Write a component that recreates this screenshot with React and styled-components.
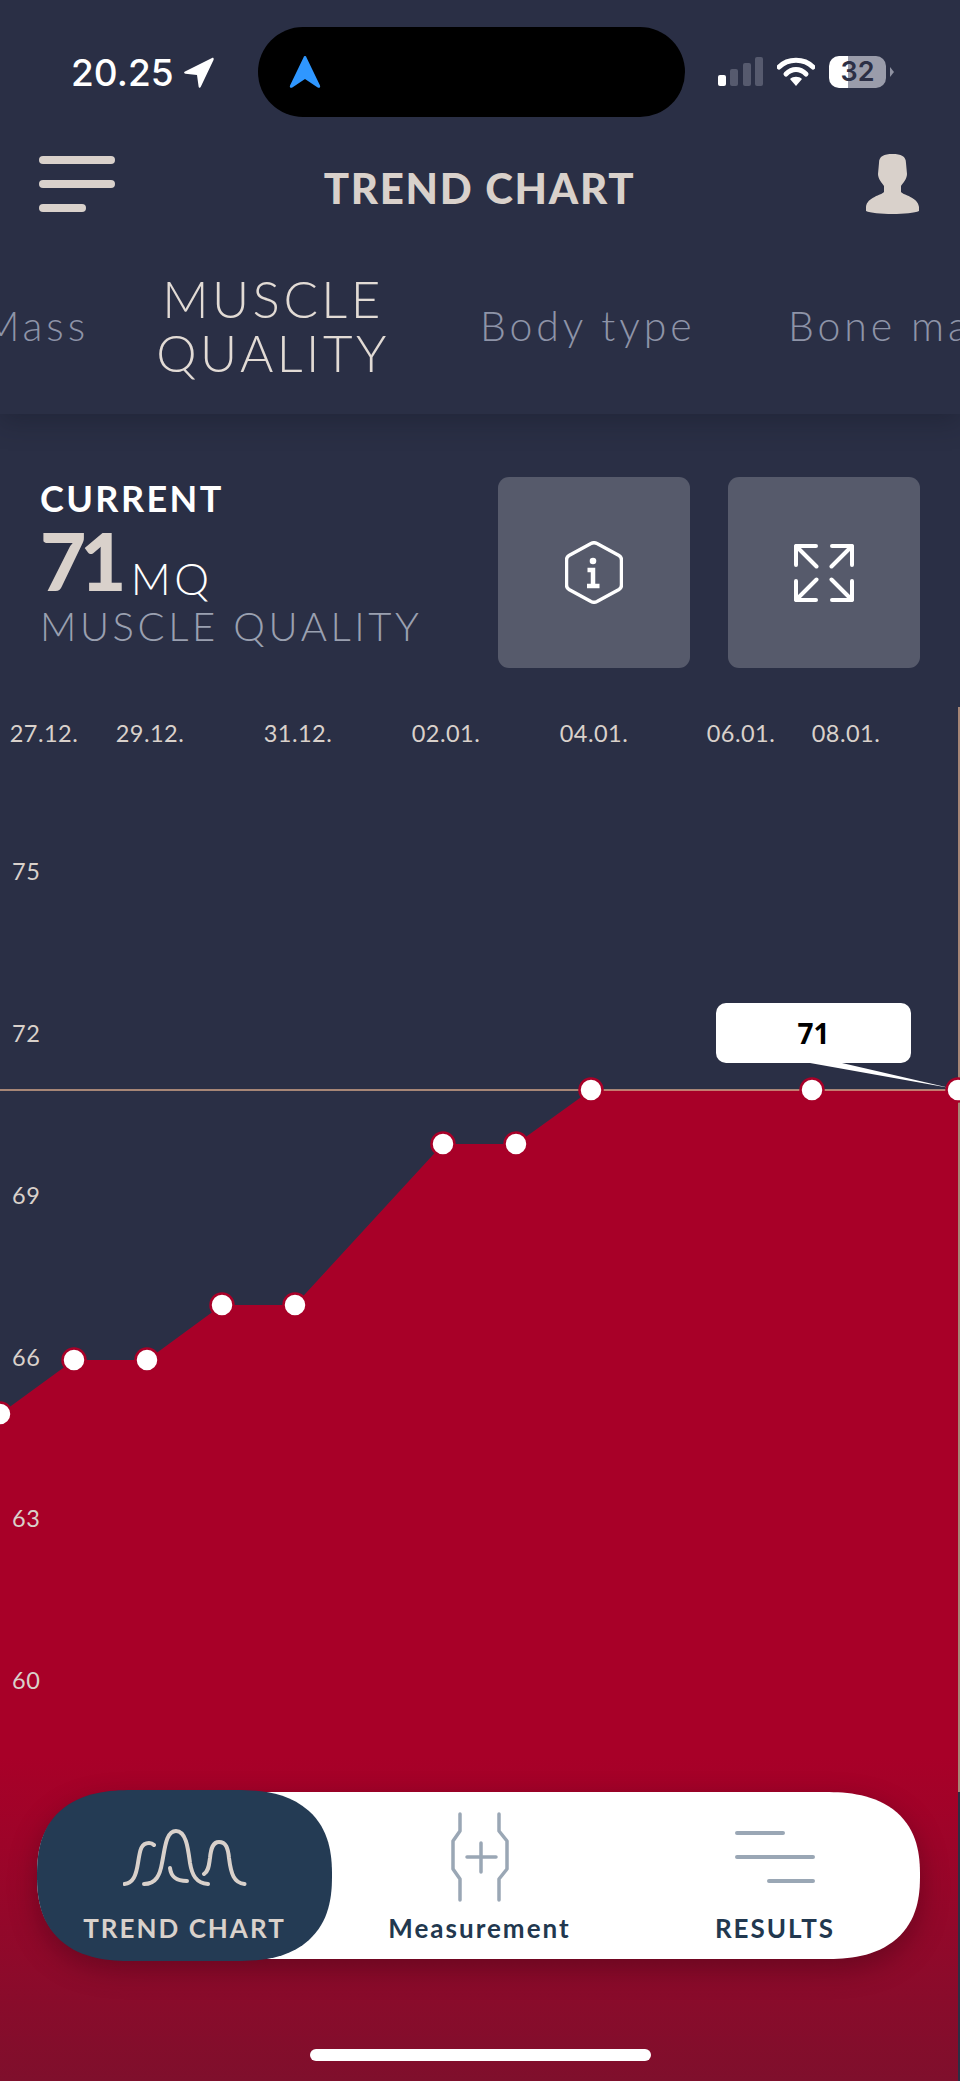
import React from "react";
import styled, { createGlobalStyle } from "styled-components";

const GlobalStyle = createGlobalStyle`
  html, body {
    margin: 0;
    padding: 0;
    background: #2a2f45;
  }
  * {
    box-sizing: border-box;
  }
`;

const Page = styled.div`
  position: relative;
  width: 960px;
  height: 2081px;
  overflow: hidden;
  background: #2a2f45;
  font-family: Lato, "Liberation Sans", sans-serif;
  display: flex;
  flex-direction: column;
`;

// header
const Header = styled.header`
  height: 414px;
  flex: none;
  display: flex;
  flex-direction: column;
  box-shadow: 0 8px 24px rgba(20, 23, 38, 0.35);
  position: relative;
  z-index: 2;
  background: #2a2f45;
`;

const StatusBar = styled.div`
  height: 118px;
  padding: 27px 0 0 71px;
  display: flex;
  align-items: flex-start;
`;

const TimeBlock = styled.div`
  width: 187px;
  height: 90px;
  display: flex;
  align-items: center;
  gap: 9px;
  font-family: Inter, sans-serif;
  font-size: 37px;
  font-weight: 500;
  color: #fff;
`;

const Island = styled.div`
  width: 427px;
  height: 90px;
  background: #000;
  border-radius: 45px;
  padding-left: 31px;
  display: flex;
  align-items: center;
`;

const StatusIcons = styled.div`
  height: 90px;
  margin-left: 33px;
  display: flex;
  align-items: center;
  gap: 14px;
`;

const Battery = styled.div`
  position: relative;
  width: 57px;
  height: 32px;
  border-radius: 10px;
  background: linear-gradient(90deg, #fff 33%, #9a9caa 33%);
  color: #2c2f45;
  font-family: Inter, sans-serif;
  font-size: 27px;
  font-weight: 600;
  line-height: 32px;
  text-align: center;

  &::after {
    content: "";
    position: absolute;
    top: 11px;
    right: -8px;
    border-left: 4px solid #8f92a2;
    border-top: 5px solid transparent;
    border-bottom: 5px solid transparent;
  }
`;

const NavRow = styled.div`
  height: 100px;
  padding: 38px 40px 0 39px;
  display: grid;
  grid-template-columns: 76px 1fr 76px;
  align-items: start;
`;

const Burger = styled.div`
  width: 76px;
  display: flex;
  flex-direction: column;
  gap: 16px;
`;

const BurgerLine = styled.span`
  display: block;
  height: 8px;
  width: ${(props) => (props.$short ? "47px" : "76px")};
  border-radius: 4px;
  background: #d9d1cb;
`;

const Title = styled.h1`
  margin: 7px 0 0 0;
  font-size: 42px;
  line-height: 50px;
  font-weight: 900;
  letter-spacing: 1.7px;
  text-align: center;
  color: #d9d1cb;
`;

const UserIcon = styled.svg`
  margin-top: -3px;
  justify-self: end;
`;

const TabRow = styled.div`
  flex: 1;
  display: grid;
  grid-template-columns: 143px 260px 385px 1fr;
  align-items: start;
  white-space: nowrap;
  overflow: hidden;
`;

const Tab = styled.div`
  font-weight: 300;
  font-size: 41px;
  line-height: 48px;
  letter-spacing: 3.9px;
  color: #8e94a8;
  margin-top: 84px;
  justify-self: ${(props) => (props.$end ? "end" : "start")};
  padding-right: ${(props) => (props.$end ? "54px" : "0")};
  padding-left: ${(props) => props.$pad || 0}px;
`;

const ActiveTab = styled.div`
  margin-top: 54px;
  text-align: center;
  font-weight: 300;
  font-size: 51px;
  line-height: 54px;
  letter-spacing: 3.5px;
  white-space: normal;
  color: #e2dbd5;
`;

// summary
const Summary = styled.section`
  flex: none;
  height: 290px;
  padding: 63px 40px 0 40px;
  display: flex;
  justify-content: space-between;
  align-items: flex-start;
`;

const Current = styled.div`
  display: flex;
  flex-direction: column;
`;

const CurrentLabel = styled.div`
  font-size: 36px;
  line-height: 36px;
  font-weight: 700;
  letter-spacing: 2.4px;
  margin-top: 3px;
  color: #fff;
`;

const ValueRow = styled.div`
  display: flex;
  align-items: baseline;
  gap: 11px;
  margin-top: 2px;
  height: 84px;
`;

const Value = styled.span`
  font-size: 80px;
  line-height: 84px;
  font-weight: 900;
  letter-spacing: -6.5px;
  color: #d9d1cb;
`;

const Unit = styled.span`
  font-size: 44px;
  font-weight: 300;
  letter-spacing: 3.5px;
  position: relative;
  top: 4px;
  color: #fff;
`;

const Metric = styled.div`
  font-size: 40px;
  line-height: 44px;
  font-weight: 300;
  letter-spacing: 3.6px;
  margin-top: 2px;
  color: #9aa0b0;
`;

const Actions = styled.div`
  display: flex;
  gap: 38px;
`;

const ActionButton = styled.div`
  width: 192px;
  height: 191px;
  border-radius: 11px;
  background: #565a6b;
  display: flex;
  align-items: center;
  justify-content: center;
`;

// chart
const ChartArea = styled.section`
  position: relative;
  flex: 1;
`;

const ChartSvg = styled.svg`
  display: block;
  width: 960px;
  height: 1377px;
`;

const AxisText = styled.text`
  font-family: Lato, "Liberation Sans", sans-serif;
  font-size: 23.5px;
  letter-spacing: 0.5px;
  fill: #d9d1cb;
`;

const Tooltip = styled.div`
  position: absolute;
  left: 716px;
  top: 299px;
  width: 195px;
  height: 60px;
  border-radius: 10px;
  background: #fff;
  color: #000;
  font-family: "Open Sans", sans-serif;
  font-size: 28px;
  font-weight: 700;
  line-height: 60px;
  text-align: center;
`;

// bottom nav
const BottomNav = styled.nav`
  position: absolute;
  left: 37px;
  top: 1792px;
  width: 883px;
  height: 167px;
  border-radius: 95px / 83px;
  corner-shape: superellipse(1.3);
  background: #fff;
  box-shadow: 0 10px 28px rgba(60, 5, 20, 0.45);
  display: grid;
  grid-template-columns: 295px 295px 296px;
  z-index: 3;
`;

const NavItem = styled.div`
  height: ${(props) => (props.$active ? "171px" : "167px")};
  margin-top: ${(props) => (props.$active ? "-2px" : "0")};
  padding-top: ${(props) => (props.$active ? "11px" : "9px")};
  border-radius: ${(props) => (props.$active ? "95px / 85px" : "0")};
  corner-shape: superellipse(1.3);
  background: ${(props) => (props.$active ? "#243b54" : "transparent")};
  color: ${(props) => (props.$active ? "#d9d1cb" : "#22384f")};
  display: flex;
  flex-direction: column;
  align-items: center;
`;

const NavIconBox = styled.div`
  height: 112px;
  display: flex;
  align-items: center;
  justify-content: center;
`;

const NavLabel = styled.div`
  font-size: 26px;
  line-height: 30px;
  font-weight: 700;
  letter-spacing: 2px;
`;

const HomeIndicator = styled.div`
  position: absolute;
  left: 310px;
  top: 2049px;
  width: 341px;
  height: 12px;
  border-radius: 6px;
  background: #fff;
  z-index: 3;
`;

const ORIGIN_Y = 704;
const points = [
  [0, 1414], [74, 1360], [147, 1360], [222, 1305], [295, 1305],
  [443, 1144], [516, 1144], [591, 1090], [812, 1090], [958, 1090],
].map(([x, y]) => [x, y - ORIGIN_Y]);

const dates = [
  ["27.12.", 44], ["29.12.", 150], ["31.12.", 298], ["02.01.", 446],
  ["04.01.", 594], ["06.01.", 741], ["08.01.", 846],
];

const yLabels = [
  ["75", 880], ["72", 1042], ["69", 1204], ["66", 1366], ["63", 1527], ["60", 1689],
];

function Chart() {
  const line = points.map((p) => p.join(",")).join(" ");
  const area = `0,1377 ${line} 958,1377`;
  return (
    <ChartArea>
      <ChartSvg viewBox="0 0 960 1377">
        <defs>
          <linearGradient id="redFade" x1="0" y1="0" x2="0" y2="1377" gradientUnits="userSpaceOnUse">
            <stop offset="0.765" stopColor="#a80028" />
            <stop offset="1" stopColor="#7f0f2c" />
          </linearGradient>
        </defs>
        <polygon points={area} fill="url(#redFade)" />
        <line x1="0" y1={1090 - ORIGIN_Y} x2="960" y2={1090 - ORIGIN_Y} stroke="#d2a587" strokeWidth="1.5" />
        <line x1="959" y1="3" x2="959" y2="1088" stroke="#d2a587" strokeWidth="1.5" />
        <polygon points={`810,${1063 - ORIGIN_Y} 842,${1063 - ORIGIN_Y} 950,${1088 - ORIGIN_Y}`} fill="#fff" />
        {dates.map(([label, x]) => (
          <AxisText key={label} x={x} y={38} textAnchor="middle">{label}</AxisText>
        ))}
        {yLabels.map(([label, y]) => (
          <AxisText key={label} x={12} y={y - ORIGIN_Y}>{label}</AxisText>
        ))}
        {points.map(([x, y]) => (
          <circle key={x} cx={x} cy={y} r="11.5" fill="#fff" stroke="#a80028" strokeWidth="2.5" />
        ))}
      </ChartSvg>
      <Tooltip>71</Tooltip>
    </ChartArea>
  );
}

export default function App() {
  return (
    <Page>
      <GlobalStyle />
      <Header>
        <StatusBar>
          <TimeBlock>
            20.25
            <svg width="31" height="31" viewBox="0 0 31 31">
              <path d="M29 1 2 14.5c-1.5.8-1 2 .5 2.2L14 18l1.6 11.5c.2 1.5 1.6 1.6 2.2.3L30.500 3c.6-1.500-.2-2.600-1.500-2z" fill="#fff" />
            </svg>
          </TimeBlock>
          <Island>
            <svg width="32" height="34" viewBox="0 0 32 34">
              <path d="M16 1c.8 0 1.200.6 1.500 1.400L31 30.500c.7 1.800-.8 3-2.300 2L16 24 3.300 32.500c-1.500 1-3-.2-2.300-2L14.500 2.400C14.800 1.600 15.200 1 16 1z" fill="#2f97ff" />
            </svg>
          </Island>
          <StatusIcons>
            <svg width="45" height="30" viewBox="0 0 45 30">
              <rect x="0" y="18" width="8" height="11" rx="2" fill="#fff" />
              <rect x="12" y="12" width="8" height="17" rx="2" fill="#565a6e" />
              <rect x="25" y="6" width="8" height="23" rx="2" fill="#565a6e" />
              <rect x="37" y="0" width="8" height="29" rx="2" fill="#565a6e" />
            </svg>
            <svg width="38" height="30" viewBox="0 0 38 30">
              <path d="M2 10C11 1 27 1 36 10" fill="none" stroke="#fff" strokeWidth="5" strokeLinecap="round" />
              <path d="M9 17c6-6 14-6 20 0" fill="none" stroke="#fff" strokeWidth="5" strokeLinecap="round" />
              <path d="M13 22c3-3 9-3 12 0l-6 7z" fill="#fff" />
            </svg>
            <Battery>32</Battery>
          </StatusIcons>
        </StatusBar>
        <NavRow>
          <Burger>
            <BurgerLine />
            <BurgerLine />
            <BurgerLine $short />
          </Burger>
          <Title>TREND CHART</Title>
          <UserIcon width="55" height="62" viewBox="0 0 55 62">
            <path d="M27.500 1C36 1 41 3 41 10l1 11c0 5-4 9-6 12v6c2 3 17 5 18 15v4c-8 4-45 4-53 0v-4c1-10 16-12 18-15v-6c-2-3-6-7-6-12l1-11C14 3 19 1 27.500 1z" fill="#d9d1cb" />
          </UserIcon>
        </NavRow>
        <TabRow>
          <Tab $end>Mass</Tab>
          <ActiveTab>MUSCLE QUALITY</ActiveTab>
          <Tab $pad={77}>Body type</Tab>
          <Tab>Bone mass</Tab>
        </TabRow>
      </Header>
      <Summary>
        <Current>
          <CurrentLabel>CURRENT</CurrentLabel>
          <ValueRow>
            <Value>71</Value>
            <Unit>MQ</Unit>
          </ValueRow>
          <Metric>MUSCLE QUALITY</Metric>
        </Current>
        <Actions>
          <ActionButton>
            <svg width="58" height="63" viewBox="0 0 58 63" fill="none" stroke="#fff" strokeWidth="3.5">
              <path d="M26 2.500Q29 1 32 2.500L54 14.500Q56.500 16 56.500 19V44Q56.500 47 54 48.500L32 60.500Q29 62 26 60.500L4 48.500Q1.500 47 1.500 44V19Q1.500 16 4 14.500z" />
              <circle cx="28" cy="20" r="3.300" fill="#fff" stroke="none" />
              <path d="M22.500 29H28V45M22 45H34.500" strokeWidth="4.500" />
            </svg>
          </ActionButton>
          <ActionButton>
            <svg width="60" height="58" viewBox="0 0 60 58" fill="none" stroke="#fff" strokeWidth="4" strokeLinecap="round" strokeLinejoin="round">
              <path d="M2 21V2h20M2 2l20.500 20.500M58 21V2H38M58 2 37.500 22.500M2 37v19h20M2 56l20.500-20.500M58 37v19H38M58 56 37.500 35.500" />
            </svg>
          </ActionButton>
        </Actions>
      </Summary>
      <Chart />
      <BottomNav>
        <NavItem $active>
          <NavIconBox>
            <svg width="124" height="58" viewBox="0 0 124 58" fill="none" stroke="#d9d1cb" strokeWidth="4" strokeLinecap="round">
              <path d="M1.500 56C10 55 13 48 15 35 17 22 18 15 26 15c2 0 4 1 5 2" />
              <path d="M21 56c12 0 16-9 18-21 3-15 4-32 14-32s12 17 14 32c2 12 6 20 18 21" />
              <path d="M47 40c1 8 5 13 17 13" />
              <path d="M81 46c5-3 5-10 6-16 1-10 3-16 9-16 7 0 9 6 10 16 2 16 5 25 15.500 26" />
            </svg>
          </NavIconBox>
          <NavLabel>TREND CHART</NavLabel>
        </NavItem>
        <NavItem>
          <NavIconBox>
            <svg width="60" height="90" viewBox="0 0 60 90" fill="none" stroke="#9aa7b5" strokeWidth="3.500" strokeLinecap="round" strokeLinejoin="round">
              <path d="M10 2V19L3 29V57L10 67V88M49 2V19L57 29V57L49 67V88" />
              <path d="M17 45H46M31 31V60" />
            </svg>
          </NavIconBox>
          <NavLabel>Measurement</NavLabel>
        </NavItem>
        <NavItem>
          <NavIconBox>
            <svg width="80" height="54" viewBox="0 0 80 54" fill="none" stroke="#9aa7b5" strokeWidth="4" strokeLinecap="round">
              <path d="M2 3h46M2 27h76M34 51h44" />
            </svg>
          </NavIconBox>
          <NavLabel>RESULTS</NavLabel>
        </NavItem>
      </BottomNav>
      <HomeIndicator />
    </Page>
  );
}
